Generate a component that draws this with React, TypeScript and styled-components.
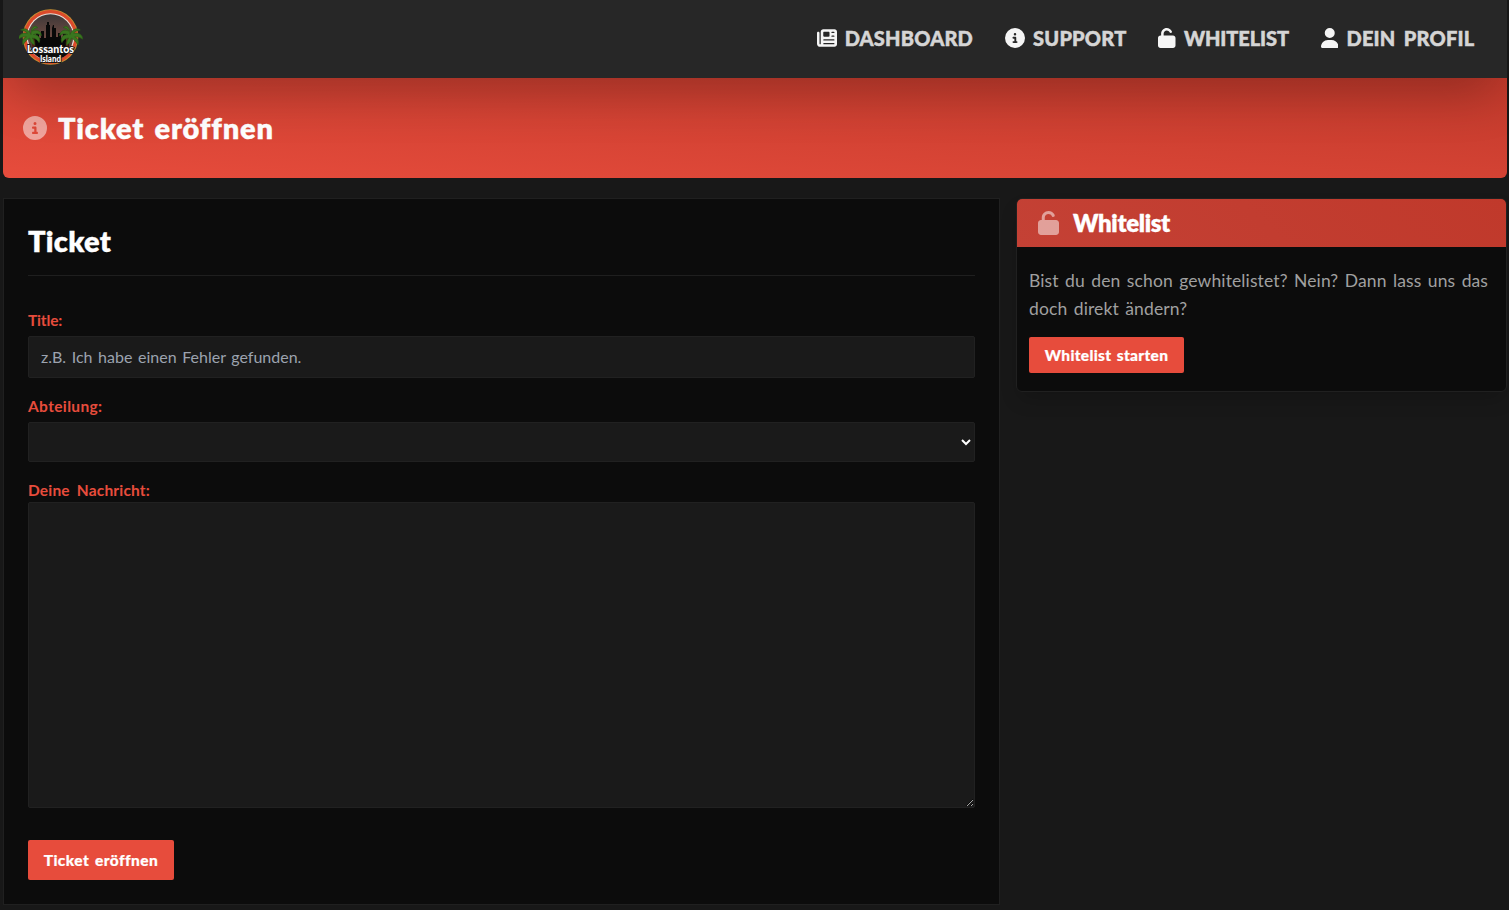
import React from 'react';
import styled, { createGlobalStyle } from 'styled-components';
import { FaNewspaper, FaCircleInfo, FaUnlock, FaUser } from 'react-icons/fa6';

const GlobalStyle = createGlobalStyle`
  *, *::before, *::after { box-sizing: border-box; }
  html { background: #181818; }
  body { margin: 0; font-family: Lato, sans-serif; color: #a0a0a0; overflow: hidden; }
`;

const Page = styled.div`
  height: 910px;
  padding: 0 2px 0 3px;
  background: #181818;
`;

const Navbar = styled.header`
  position: relative;
  z-index: 1;
  height: 78px;
  padding: 0 32.5px 0 16px;
  display: flex;
  align-items: center;
  justify-content: space-between;
  background: #272727;
  box-shadow: 0 25px 50px -12px rgba(0, 0, 0, 0.25);
`;

const Nav = styled.nav`
  display: flex;
  gap: 32px;
  margin-top: -2px;
`;

const NavLink = styled.a<{ $spacing?: number; $word?: number; $narrow?: boolean }>`
  display: flex;
  align-items: center;
  gap: 8px;
  color: #d5d5d5;
  font-size: 20px;
  line-height: 24px;
  font-weight: 900;
  white-space: nowrap;
  letter-spacing: ${p => p.$spacing ?? 0.1}px;
  word-spacing: ${p => p.$word ?? 0}px;
  -webkit-text-stroke: 0.5px #d5d5d5;

  svg { color: #f5f5f5; height: 20px; width: ${p => (p.$narrow ? 17.5 : 20)}px; flex: none; }
`;

const LogoSvg = styled.svg`
  display: block;
  width: 64px;
  height: 60px;
  margin-top: -4px;
`;

const Banner = styled.section`
  height: 100px;
  padding: 0 20px;
  display: flex;
  align-items: center;
  gap: 11px;
  border-radius: 0 0 6px 6px;
  background: linear-gradient(to top right, #e74c3c, #c0392b);

  svg { width: 24px; height: 24px; color: rgba(255, 255, 255, 0.5); }
`;

const BannerTitle = styled.h1`
  margin: 0;
  color: #fff;
  font-size: 29px;
  line-height: 34px;
  font-weight: 800;
  letter-spacing: 0.8px;
  word-spacing: 2.8px;
  font-variant-ligatures: none;
  -webkit-text-stroke: 0.3px #fff;
`;

const Content = styled.main`
  display: grid;
  grid-template-columns: 997px 491px;
  gap: 16px;
  align-items: start;
  padding-top: 20px;
`;

const TicketCard = styled.form`
  height: 707px;
  padding: 24px;
  border: 1px solid #202020;
  background: #0c0c0c;
  display: flex;
  flex-direction: column;
  align-items: stretch;
`;

const CardTitle = styled.h2`
  margin: 0 0 28px;
  height: 53px;
  border-bottom: 1px solid #1f1f1f;
  color: #fff;
  font-size: 29px;
  line-height: 36px;
  font-weight: 800;
  letter-spacing: 0.3px;
  -webkit-text-stroke: 0.3px #fff;
`;

const Label = styled.label<{ $spacing: number; $tight?: boolean }>`
  height: ${p => (p.$tight ? 21 : 25)}px;
  margin-top: 7px;
  color: #e74c3c;
  font-size: 15.5px;
  line-height: 18px;
  font-weight: 700;
  letter-spacing: ${p => p.$spacing}px;
  word-spacing: 3px;
`;

const fieldStyle = `
  width: 100%;
  margin: 0;
  border: 1px solid #212121;
  border-radius: 2px;
  background-color: #1a1a1a;
  outline: none;
  color: #fff;
  font-family: Lato, sans-serif;
  font-size: 16px;
`;

const TextInput = styled.input`
  ${fieldStyle}
  height: 42px;
  padding: 0 12px 1px;
  margin-bottom: 12px;
  word-spacing: 1.5px;

  &::placeholder { color: #9ca3af; opacity: 1; }
`;

const Select = styled.select`
  ${fieldStyle}
  height: 40px;
  margin-bottom: 12px;
  padding: 0;
`;

const TextArea = styled.textarea`
  ${fieldStyle}
  display: block;
  height: 306px;
  resize: vertical;
  color-scheme: dark;
`;

const Button = styled.button<{ $large?: boolean }>`
  align-self: flex-start;
  display: flex;
  align-items: center;
  justify-content: center;
  width: ${p => (p.$large ? 146 : 155)}px;
  height: ${p => (p.$large ? 40 : 36)}px;
  margin-top: ${p => (p.$large ? 32 : 14)}px;
  padding: 0 0 1px;
  border: 0;
  border-radius: 2px;
  background: #e74c3c;
  color: #fff;
  font-family: Lato, sans-serif;
  font-size: 15.5px;
  font-weight: 900;
  letter-spacing: ${p => (p.$large ? 0.45 : 0.3)}px;
  word-spacing: 1.5px;
  white-space: nowrap;
  font-variant-ligatures: none;
  -webkit-text-stroke: 0.2px #fff;
`;

const SideCard = styled.aside`
  height: 194px;
  border: 1px solid #202020;
  border-radius: 6px;
  background: #0c0c0c;
  overflow: hidden;
  box-shadow: 0 10px 20px -4px rgba(0, 0, 0, 0.2);
`;

const SideHeader = styled.div`
  height: 48px;
  padding-left: 21px;
  display: flex;
  align-items: center;
  gap: 14px;
  background: linear-gradient(45deg, #c44135, #c0392b);

  svg { width: 21px; height: 24px; color: rgba(255, 255, 255, 0.5); }
`;

const SideTitle = styled.h3`
  margin: 0;
  color: #fff;
  font-size: 24px;
  line-height: 28px;
  font-weight: 800;
  letter-spacing: -0.34px;
  -webkit-text-stroke: 0.3px #fff;
`;

const SideBody = styled.div`
  padding: 20px 12px 0;
`;

const SideText = styled.p`
  margin: 0;
  font-size: 17.5px;
  line-height: 28px;
  letter-spacing: 0.12px;
  word-spacing: 1.8px;
  color: #a0a0a0;
`;

const Skyline =
  'M14 46V29h3v-3h3v5h2V24h3v7h2V18h1v-3h2v3h1v12h2V21l1-3h1v3h2v9h2V26h3v5h2v-4h3v8h3v11z';

const Palm = ({ x, flip }: { x: number; flip?: boolean }) => (
  <g transform={`translate(${x} 31) scale(${flip ? -1.15 : 1.15} 1.15)`}>
    <path d="M0-3C3 1 3 6 2 13" stroke="#4d2410" strokeWidth="2.6" fill="none" />
    <path
      d="M0-3C-2-8-6-9-9-7c3 0 5 2 6 3-4-1-8 1-8 5 3-2 5-2 7-2-3 1-4 4-3 7 2-3 4-5 6-6 0 2 1 5 4 6 0-3-1-5-2-6 3 0 5 2 6 4 2-4-1-7-5-7 2-1 5-1 7 1 0-4-4-6-8-4 1-2 3-3 5-3-3-3-6 0-6 6z"
      fill="#39761f"
      stroke="#2b5a18"
      strokeWidth=".6"
    />
  </g>
);

const Logo = () => (
  <LogoSvg viewBox="0 0 64 60" aria-label="Lossantos Island">
    <defs>
      <linearGradient id="sky" x1="0" y1="0" x2="0" y2="1">
        <stop offset="0" stopColor="#3d3737" />
        <stop offset=".5" stopColor="#6d4a42" />
        <stop offset="1" stopColor="#292222" />
      </linearGradient>
    </defs>
    <circle cx="31.5" cy="30" r="27.8" fill="#c79032" />
    <circle cx="31.5" cy="30" r="27" fill="#dc4a2b" />
    <circle cx="31.5" cy="30" r="23.8" fill="#e9dfd9" />
    <circle cx="31.5" cy="30" r="22.7" fill="url(#sky)" />
    <path d={Skyline} fill="#080808" />
    <path d="M12 42h40c-3 7-11 11-20 11s-17-4-20-11z" fill="#0b0b0b" />
    <Palm x={12} />
    <Palm x={51} flip />
    <g
      fill="#fff"
      stroke="#151515"
      strokeWidth="1.8"
      paintOrder="stroke"
      fontFamily="Lato, sans-serif"
      fontWeight="900"
    >
      <text x="8" y="45.8" fontSize="11.5" textLength="47" lengthAdjust="spacingAndGlyphs">Lossantos</text>
      <text x="21" y="54.6" fontSize="8.5" textLength="21" lengthAdjust="spacingAndGlyphs">Island</text>
    </g>
  </LogoSvg>
);

export default function App() {
  return (
    <>
      <GlobalStyle />
      <Page>
        <Navbar>
          <Logo />
          <Nav>
            <NavLink $spacing={0.2}><FaNewspaper />DASHBOARD</NavLink>
            <NavLink $spacing={0.2}><FaCircleInfo />SUPPORT</NavLink>
            <NavLink $spacing={-0.09} $narrow><FaUnlock />WHITELIST</NavLink>
            <NavLink $spacing={0.22} $word={3.3} $narrow><FaUser />DEIN PROFIL</NavLink>
          </Nav>
        </Navbar>
        <Banner>
          <FaCircleInfo />
          <BannerTitle>Ticket eröffnen</BannerTitle>
        </Banner>
        <Content>
          <TicketCard>
            <CardTitle>Ticket</CardTitle>
            <Label $spacing={-0.15}>Title:</Label>
            <TextInput placeholder="z.B. Ich habe einen Fehler gefunden." />
            <Label $spacing={0.36}>Abteilung:</Label>
            <Select />
            <Label $spacing={0.18} $tight>Deine Nachricht:</Label>
            <TextArea />
            <Button type="button" $large>Ticket eröffnen</Button>
          </TicketCard>
          <SideCard>
            <SideHeader>
              <FaUnlock />
              <SideTitle>Whitelist</SideTitle>
            </SideHeader>
            <SideBody>
              <SideText>
                Bist du den schon gewhitelistet? Nein? Dann lass uns das doch direkt ändern?
              </SideText>
              <Button type="button">Whitelist starten</Button>
            </SideBody>
          </SideCard>
        </Content>
      </Page>
    </>
  );
}
